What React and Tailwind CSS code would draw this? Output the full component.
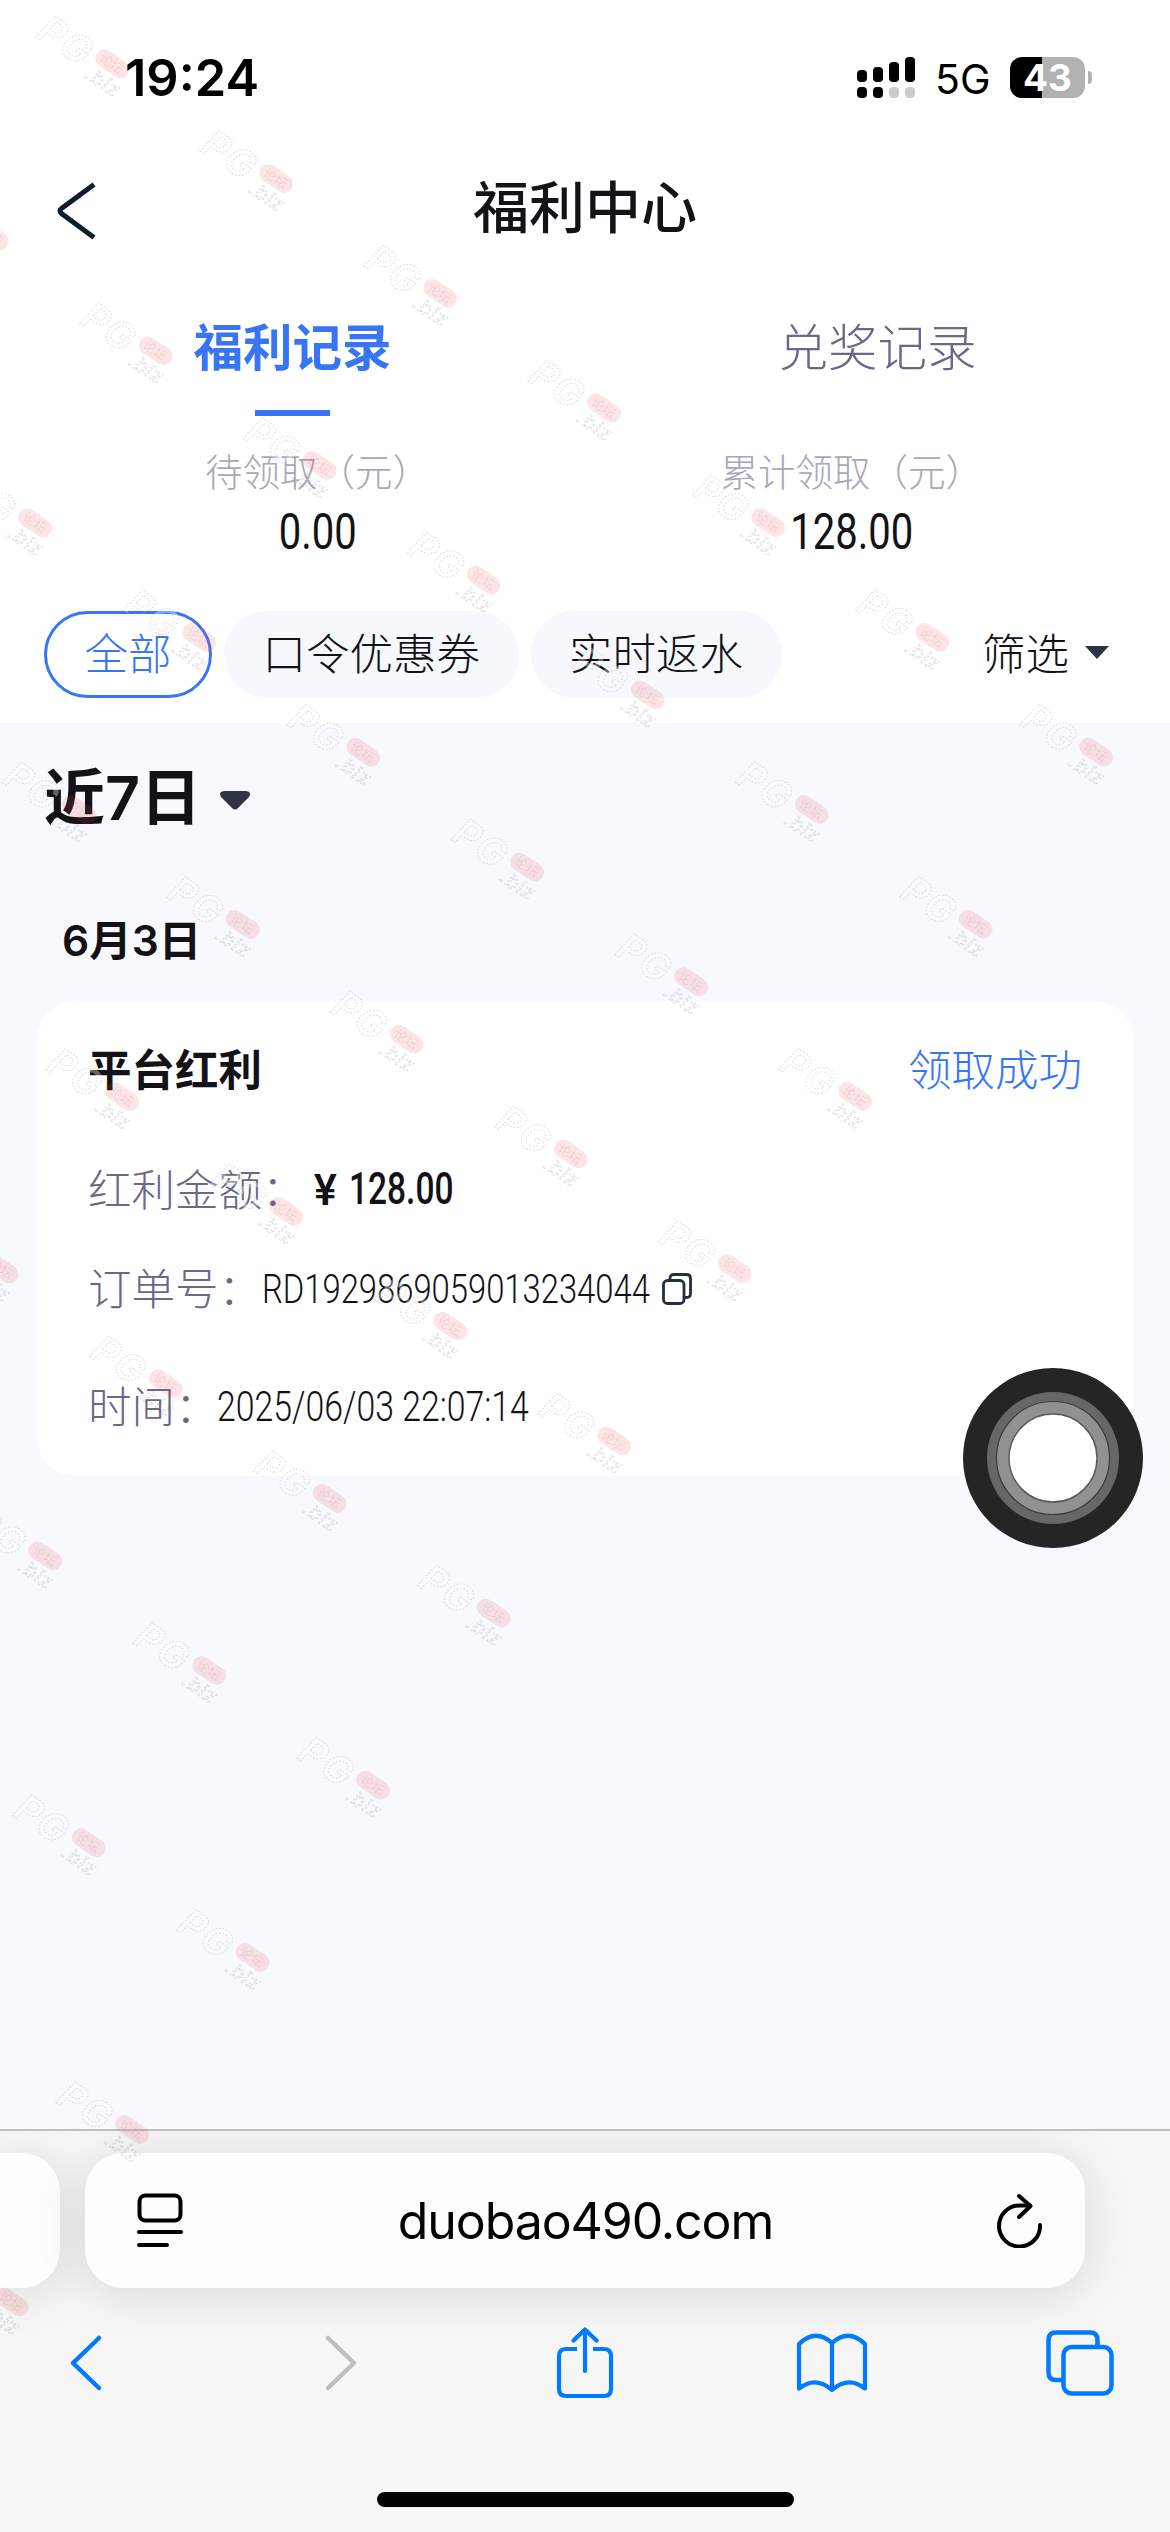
import React from "react";

const cjk = "font-['Inter','Noto_Sans_CJK_SC',sans-serif]";
const din = "font-['Roboto','Noto_Sans_CJK_SC',sans-serif]";

const chips = ["全部", "口令优惠券", "实时返水"];

// Watermark grid: every row starts lower and ends one column earlier
const marks = [];
for (let row = 0; row < 10; row++) {
  for (let col = -3; col <= 6 - row; col++) {
    const x = 33 + col * 164 + row * 43.5;
    const y = 14 + col * 114.7 + row * 286.9;
    if (x > -115 && y > -40) marks.push({ x, y });
  }
}

function Watermark() {
  return (
    <svg
      className="absolute inset-0 pointer-events-none"
      width="1170"
      height="2532"
      viewBox="0 0 1170 2532"
    >
      {marks.map((m, i) => (
        <g key={i} transform={`translate(${m.x} ${m.y}) rotate(34)`}>
          {m.x > -70 && (
            <text
              x="14"
              y="17"
              fontFamily="Inter, sans-serif"
              fontSize="38"
              fontWeight="600"
              fontStyle="italic"
              letterSpacing="2"
              fill="#fff"
              fillOpacity="0.35"
              stroke="#55506a"
              strokeOpacity="0.18"
              strokeWidth="1.2"
              strokeDasharray="2 1.5"
            >
              PG
            </text>
          )}
          <rect x="75" y="-12" width="37" height="18" rx="9" fill="#f0414b" fillOpacity="0.14" />
          <text
            x="80"
            y="2"
            fontFamily="Noto Sans CJK SC, sans-serif"
            fontSize="13"
            fill="#8a4a55"
            fillOpacity="0.12"
          >
            论坛
          </text>
          <text
            x="77"
            y="24"
            fontFamily="Inter, sans-serif"
            fontSize="20"
            fontStyle="italic"
            letterSpacing="1"
            fill="none"
            stroke="#55506a"
            strokeOpacity="0.2"
            strokeDasharray="3 1.5"
          >
            .biz
          </text>
        </g>
      ))}
    </svg>
  );
}

function StatusBar() {
  return (
    <div className="flex h-[155px] items-start pt-[57px] pl-[125px] pr-[78px]">
      <span className="h-[42px] text-[50.500px] leading-[42px] font-semibold text-black">
        19:24
      </span>
      <svg className="ml-auto" width="58" height="42" viewBox="0 0 58 42">
        <rect x="0" y="13" width="10" height="12" rx="4" />
        <rect x="16" y="10" width="10" height="15" rx="4" />
        <rect x="32" y="5" width="10" height="20" rx="4" />
        <rect x="48" y="0" width="10" height="25" rx="4" />
        <rect x="0" y="30" width="10" height="11" rx="4" />
        <rect x="16" y="30" width="10" height="11" rx="4" />
        <rect x="32" y="30" width="10" height="11" rx="4" fill="#ccc" />
        <rect x="48" y="30" width="10" height="11" rx="4" fill="#ccc" />
      </svg>
      <span className="ml-5 w-[54px] text-[41px] leading-[44px] text-black">5G</span>
      <div className="ml-[21px] flex h-[41px] w-[75px] items-center justify-center rounded-[12px] bg-[linear-gradient(90deg,#000_32px,#b1b1b1_32px)] text-[37px] font-bold leading-none text-white">
        43
      </div>
      <div className="mt-[14px] ml-[3px] h-[13px] w-[4px] rounded-r-full bg-[#b1b1b1]" />
    </div>
  );
}

function Header() {
  return (
    <div className="flex h-[106px] items-center justify-center">
      <svg className="mr-auto ml-[56px] mt-1.5" width="40" height="58" viewBox="0 0 40 58">
        <path d="M38 2.5 5.5 26.5q-3 2.5 0 5L38 55.5" fill="none" stroke="#0e1c2b" strokeWidth="5" />
      </svg>
      <h1 className="mr-auto pr-[96px] text-[56px] leading-none font-medium text-[#121217]">
        福利中心
      </h1>
    </div>
  );
}

function Tabs() {
  return (
    <div className="grid grid-cols-2 text-center text-[49.5px] leading-[74px]">
      <div className="flex h-[155px] flex-col items-center pt-[50px] font-bold text-[#3875f6]">
        福利记录
        <div className="mt-[25px] h-[6px] w-[75px] shrink-0 bg-[#3875f6]" />
      </div>
      <div className="pt-[50px] font-light text-[#6b6789]">兑奖记录</div>
    </div>
  );
}

function Stat({ label, value }) {
  return (
    <div className="flex flex-col items-center">
      <div className="text-[37.5px] leading-[54px] font-light text-[#a9a6bd]">{label}</div>
      <div
        className={`${din} h-[62px] scale-x-[0.8] text-[50px] leading-[64px] text-[#121217]`}
      >
        {value}
      </div>
    </div>
  );
}

function Filters() {
  return (
    <div className="flex h-[112px] items-start gap-3 pl-[44px] pr-[61px] text-[43.5px] font-light text-[#121217]">
      {chips.map((c, i) => (
        <div
          key={c}
          className={
            "flex h-[87px] items-center rounded-full leading-none " +
            (i === 0
              ? "border-[3px] border-[#3875f6] px-[37.5px] text-[#3875f6]"
              : "bg-[#f7f8fe] px-[38.5px]")
          }
        >
          {c}
        </div>
      ))}
      <div className="ml-auto flex h-[87px] items-center leading-none">
        筛选
        <svg className="ml-[16px] -mt-1" width="24" height="13" viewBox="0 0 24 13">
          <path d="M0 0h24L12 13z" fill="#303345" />
        </svg>
      </div>
    </div>
  );
}

function Row({ label, children, className }) {
  return (
    <div className={`flex h-[60px] items-center text-[43.5px] leading-[60px] ${className}`}>
      <span className="font-light text-[#6b6789]">{label}</span>
      {children}
    </div>
  );
}

function Card() {
  return (
    <div className="mx-[37px] h-[475px] rounded-[38px] bg-white px-[51px] pt-[39px]">
      <div className="flex h-[60px] items-center justify-between text-[43.5px] leading-[60px]">
        <span className="font-bold text-[#121217]">平台红利</span>
        <span className="font-light text-[#3875f6]">领取成功</span>
      </div>
      <Row label="红利金额：" className="mt-[60px]">
        <span className="ml-[8px] w-[35px] text-[42px] font-semibold text-[#121217]">¥</span>
        <span
          className={`${din} w-[110px] origin-left scale-x-[0.77] text-[43.5px] font-medium text-[#121217]`}
        >
          128.00
        </span>
      </Row>
      <Row label="订单号：" className="mt-[39px]">
        <span
          className={`${din} w-[400px] origin-left scale-x-[0.79] text-[41.5px] font-light text-[#121217]`}
        >
          RD1929869059013234044
        </span>
        <svg width="30" height="32" viewBox="0 0 30 32" fill="none" stroke="#25303f" strokeWidth="2.8">
          <rect x="1.5" y="7.5" width="20.5" height="23" rx="4" />
          <path d="M8 7V5.500q0-4 4-4h12.500q4 0 4 4v15q0 4-4 4H22" />
        </svg>
      </Row>
      <Row label="时间：" className="mt-[58px]">
        <span
          className={`${din} -ml-[2px] origin-left scale-x-[0.805] whitespace-nowrap text-[42px] font-light text-[#121217]`}
        >
          2025/06/03 22:07:14
        </span>
      </Row>
    </div>
  );
}

function AssistiveTouch() {
  return (
    <svg className="absolute left-[963px] top-[1368px]" width="180" height="180" viewBox="0 0 180 180">
      <circle cx="90" cy="90" r="90" fill="#252525" />
      <circle cx="90" cy="90" r="66" fill="#676767" />
      <circle cx="90" cy="90" r="56.500" fill="#919191" stroke="#3c3c3c" strokeWidth="1.2" />
      <circle cx="90" cy="90" r="44" fill="#fff" stroke="#5c5c5c" strokeWidth="1.5" />
    </svg>
  );
}

function Browser() {
  return (
    <div className="flex flex-1 flex-col overflow-hidden border-t-2 border-[#c0c0c2] bg-[#f6f6f6]">
      <div className="mt-[22px] flex h-[135px] gap-[25px]">
        <div className="w-[60px] shrink-0 rounded-r-[38px] bg-[#fdfdfd] shadow-[0_6px_50px_rgba(0,0,0,0.12)]" />
        <div className="flex w-[1000px] items-center rounded-[38px] bg-[#fdfdfd] pl-[52px] pr-[42px] shadow-[0_6px_50px_rgba(0,0,0,0.12)]">
          <svg width="46" height="55" viewBox="0 0 46 55" fill="none" stroke="#000" strokeWidth="4">
            <rect x="2.500" y="2.500" width="41" height="25" rx="6" />
            <path d="M2 39h42M2 52h28" strokeLinecap="round" />
          </svg>
          <span className="flex-1 pr-[9px] text-center text-[50px] leading-none text-black tracking-[-1.1px]">
            duobao490.com
          </span>
          <svg width="46" height="54" viewBox="0 0 46 54" fill="none" stroke="#000" strokeWidth="4" strokeLinecap="round">
            <path d="M43 31A20.500 20.500 0 1 1 22.500 11.500H33" />
            <path d="M22 2 33.500 12 22 23" strokeLinejoin="round" />
          </svg>
        </div>
      </div>
      <div className="mt-[35px] flex h-[80px] items-center pl-[69px]">
        <svg width="34" height="56" viewBox="0 0 34 56" fill="none" stroke="#007aff" strokeWidth="4.500" strokeLinecap="round" strokeLinejoin="round">
          <path d="M30 3 4 28l26 25" />
        </svg>
        <svg className="ml-[221px]" width="34" height="56" viewBox="0 0 34 56" fill="none" stroke="#bfbfbf" strokeWidth="4.500" strokeLinecap="round" strokeLinejoin="round">
          <path d="M4 3l26 25L4 53" />
        </svg>
        <svg className="ml-[198px]" width="58" height="72" viewBox="0 0 58 72" fill="none" stroke="#007aff" strokeWidth="4.200" strokeLinecap="round" strokeLinejoin="round">
          <path d="M21 22H10q-7 0-7 7v33q0 7 7 7h38q7 0 7-7V29q0-7-7-7H37" strokeLinecap="butt" />
          <path d="M29 44V3M17.500 13.500 29 2.500l11.500 11" />
        </svg>
        <svg className="ml-[182px]" width="72" height="60" viewBox="0 0 72 60" fill="none" stroke="#007aff" strokeWidth="4.200" strokeLinejoin="round">
          <path d="M36 57Q19.500 42.500 3 55.500V11Q19.500-5 36 10Q52.500-5 69 11V55.500Q52.500 42.500 36 57zM36 10v46" />
        </svg>
        <svg className="ml-[178px]" width="68" height="66" viewBox="0 0 68 66" fill="none" stroke="#007aff" strokeWidth="4.500">
          <rect x="17.500" y="17" width="48" height="46.500" rx="8" />
          <path d="M17 50H10q-7.500 0-7.500-7.500V10Q2.500 2.500 10 2.500h34q7.500 0 7.500 7.500v6" />
        </svg>
      </div>
      <div className="mt-[89px] h-[15px] w-[417px] self-center rounded-full bg-black" />
    </div>
  );
}

export default function App() {
  return (
    <div className={`${cjk} relative flex h-[2532px] w-[1170px] flex-col overflow-hidden bg-white`}>
      <StatusBar />
      <Header />
      <Tabs />
      <div className="flex h-[195px] justify-between pt-[30px] pl-[205px] pr-[187px]">
        <Stat label="待领取（元）" value="0.00" />
        <Stat label="累计领取（元）" value="128.00" />
      </div>
      <Filters />
      <div className="h-[1406px] bg-[#f7f9fe]">
        <div className="flex h-[151px] items-center pl-[44px] text-[61px] leading-none font-semibold text-[#121217]">
          近7日
          <svg className="ml-[19px] mt-1" width="30" height="19" viewBox="0 0 30 19">
            <path d="M4 0h22q6 1 3 6L18 17q-3 3-6 0L1 6q-3-5 3-6z" fill="#303345" />
          </svg>
        </div>
        <div className="h-[127px] pt-[37px] pl-[62px] text-[42.500px] leading-[60px] font-semibold text-[#121217]">
          6月3日
        </div>
        <Card />
      </div>
      <Browser />
      <Watermark />
      <AssistiveTouch />
    </div>
  );
}
